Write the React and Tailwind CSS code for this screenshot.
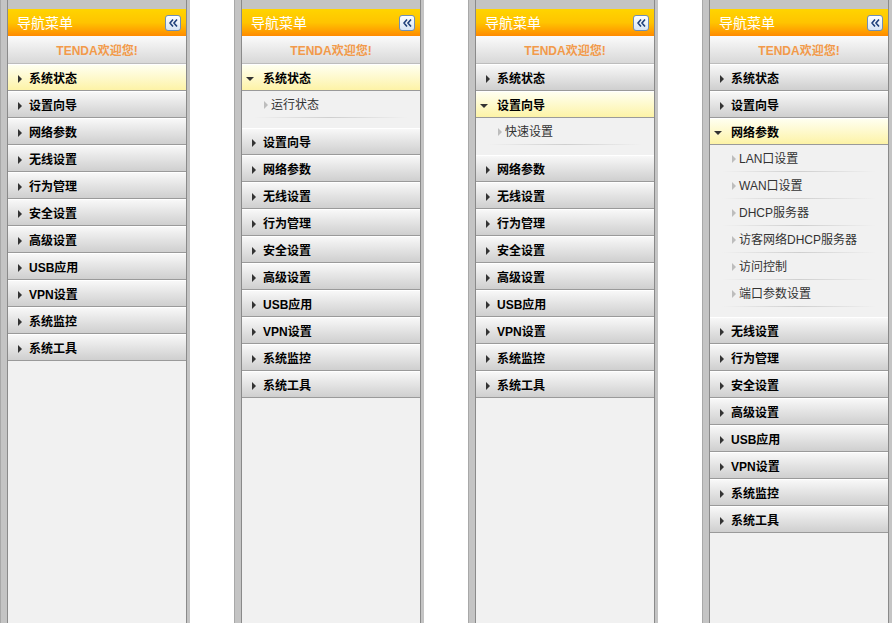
import React from "react";

const MENU = [
  "系统状态",
  "设置向导",
  "网络参数",
  "无线设置",
  "行为管理",
  "安全设置",
  "高级设置",
  "USB应用",
  "VPN设置",
  "系统监控",
  "系统工具",
];

// each panel: which row is highlighted, and whether it's expanded with sub items
const PANELS = [
  { active: 0, subs: null },
  { active: 0, subs: ["运行状态"] },
  { active: 1, subs: ["快速设置"] },
  {
    active: 2,
    subs: ["LAN口设置", "WAN口设置", "DHCP服务器", "访客网络DHCP服务器", "访问控制", "端口参数设置"],
  },
];

function ArrowRight({ color = "#333" }) {
  return (
    <svg width="4" height="8" viewBox="0 0 4 8" className="shrink-0">
      <polygon points="0,0 4,4 0,8" fill={color} />
    </svg>
  );
}

function ArrowDown() {
  return (
    <svg width="8" height="4" viewBox="0 0 8 4" className="shrink-0">
      <polygon points="0,0 8,0 4,4" fill="#333" />
    </svg>
  );
}

function CollapseIcon() {
  return (
    <svg width="9" height="8" viewBox="0 0 9 8">
      <path d="M4 0.5 L1 4 L4 7.5 M8 0.5 L5 4 L8 7.5" fill="none" stroke="#1d3f7a" strokeWidth="1.6" />
    </svg>
  );
}

function MenuRow({ label, active, open }) {
  return (
    <div
      className={
        "h-[27px] flex items-center pt-[2px] border-b border-[#9a9a9a] border-t border-t-white " +
        (active
          ? "bg-gradient-to-b from-[#fffff0] to-[#fdf3a6]"
          : "bg-gradient-to-b from-[#f8f8f8] to-[#cfcfcf]")
      }
    >
      {open ? (
        <div className="w-[21px] pl-[4px] flex items-center">
          <ArrowDown />
        </div>
      ) : (
        <div className="w-[21px] pl-[10px] flex items-center">
          <ArrowRight />
        </div>
      )}
      <span className="text-[12px] font-bold text-black leading-none">{label}</span>
    </div>
  );
}

function SubList({ items }) {
  return (
    <div className="bg-[#f1f1f1] pb-[10px]">
      {items.map((s) => (
        <div key={s}>
          <div className="h-[26px] flex items-center pt-[2px]">
            <div className="w-[29px] pl-[22px] flex items-center">
              <ArrowRight color="#bdbdbd" />
            </div>
            <span className="text-[12px] text-[#333] leading-none">{s}</span>
          </div>
          <div className="h-px mx-[12px] bg-gradient-to-r from-[#f1f1f1] via-[#cfcfcf] to-[#f1f1f1]" />
        </div>
      ))}
    </div>
  );
}

function NavPanel({ active, subs }) {
  return (
    <div className="w-[234px] h-full shrink-0 flex">
      {/* left frame */}
      <div className="w-[8px] h-full bg-[#c4c4c4] border-l border-[#a8a8a8] border-r border-r-[#8a8a8a]" />

      <div className="w-[178px] h-full flex flex-col bg-[#f1f1f1]">
        <div className="h-[9px] bg-[#c4c4c4]" />

        {/* header */}
        <div className="h-[27px] flex items-center justify-between pl-[9px] pr-[5px] bg-gradient-to-b from-[#ffd400] via-[#ffc400] to-[#ff8a00]">
          <span className="text-[14px] text-white leading-none">导航菜单</span>
          <div className="w-[16px] h-[16px] rounded-[3px] border border-[#6f8fb8] bg-gradient-to-b from-white to-[#d6e4f4] flex items-center justify-center">
            <CollapseIcon />
          </div>
        </div>

        {/* welcome */}
        <div className="h-[28px] flex items-center justify-center pt-[2px] border-b border-[#bdbdbd] bg-gradient-to-b from-[#fbfbfb] to-[#d8d8d8]">
          <span className="text-[12px] font-bold text-[#f29a4a] leading-none">TENDA欢迎您!</span>
        </div>

        {MENU.map((m, i) => {
          const open = subs && i === active;
          return (
            <React.Fragment key={m}>
              <MenuRow label={m} active={i === active} open={open} />
              {open && <SubList items={subs} />}
            </React.Fragment>
          );
        })}

        <div className="flex-1 bg-[#f1f1f1]" />
      </div>

      {/* right frame */}
      <div className="w-[4px] h-full bg-[#c4c4c4] border-l border-[#8a8a8a]" />
      <div className="flex-1 h-full bg-white" />
    </div>
  );
}

export default function App() {
  return (
    <div className="w-[893px] h-[623px] overflow-hidden bg-white flex font-['Liberation_Sans','Noto_Sans_CJK_SC',sans-serif]">
      {PANELS.map((p, i) => (
        <NavPanel key={i} active={p.active} subs={p.subs} />
      ))}
    </div>
  );
}
